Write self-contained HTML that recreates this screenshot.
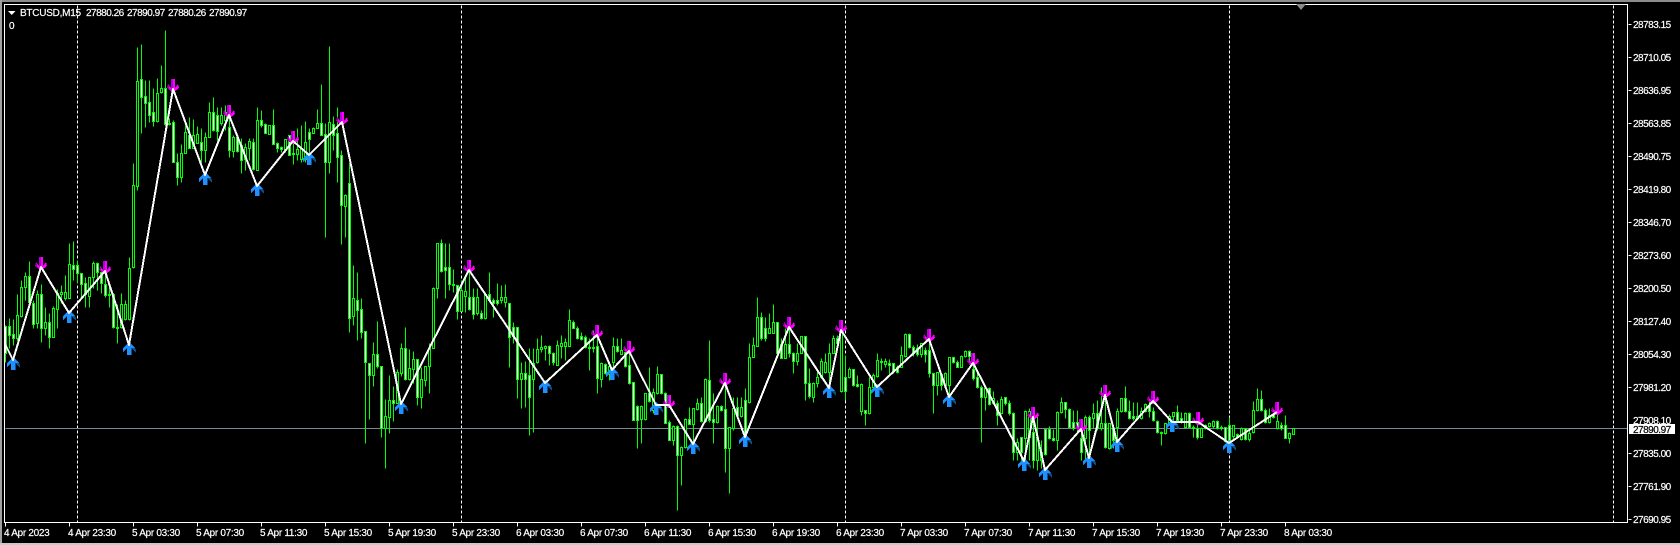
<!DOCTYPE html>
<html><head><meta charset="utf-8"><style>
html,body{margin:0;padding:0;background:#000;width:1680px;height:545px;overflow:hidden}
svg{display:block}
text{font-family:"Liberation Sans",sans-serif;font-size:10px;fill:#fff;stroke:#fff;stroke-width:.2px;letter-spacing:-.5px}
.t text{letter-spacing:-.3px}
</style></head><body>
<svg width="1680" height="545" viewBox="0 0 1680 545" xmlns="http://www.w3.org/2000/svg">
<rect width="1680" height="545" fill="#000"/>
<rect width="1680" height="2" fill="#8c8c8c"/>
<rect y="0" width="2" height="545" fill="#a0a0a0"/>
<rect y="543" width="1680" height="2" fill="#c8c8c8"/>
<g transform="translate(.5 .5)" shape-rendering="crispEdges" fill="none">
<path d="M77 5V522M461 5V522M845 5V522M1229 5V522M1613 5V522" stroke="#fff" stroke-dasharray="3 2"/>
<path d="M5 428H1627" stroke="#778899"/>
<path stroke="#0f0" d="M5 325V362M9 318V348M13 319V345M17 294V340M21 280V317M25 272V300M29 261V303M33 300V328M37 290V328M41 284V342M45 307V335M49 313V348M53 306V337M57 289V328M61 285V303M65 275V300M69 243V298M73 241V280M77 260V283M81 273V297M85 277V307M89 277V307M93 261V288M97 262V290M101 268V293M105 272V297M109 283V307M113 293V328M117 304V343M121 293V328M125 300V320M129 257V320M133 163V268M137 47V190M141 44V133M145 80V127M149 80V122M153 88V126M157 78V122M161 65V93M165 30V125M169 118V125M173 120V162M177 153V185M181 144V182M185 125V153M189 117V148M193 119V148M197 126V143M201 128V162M205 132V162M209 102V137M213 97V131M217 107V140M221 107V125M225 105V130M229 107V157M233 135V157M237 137V152M241 138V173M245 143V170M249 138V160M253 138V170M257 107V170M261 110V127M265 123V133M269 125V134M273 109V144M277 142V152M281 146V152M285 139V152M289 135V155M293 137V164M297 128V160M301 125V162M305 121V162M309 128V152M313 127V133M317 109V128M321 84V135M325 123V237M329 46V173M333 116V150M337 107V182M341 150V244M345 194V237M349 163V332M353 265V325M357 272V340M361 298V338M365 331V443M369 363V419M373 342V386M377 321V368M381 366V437M385 399V468M389 375V433M393 386V421M397 369V403M401 343V376M405 327V380M409 349V380M413 351V383M417 359V405M421 367V408M425 366V386M429 343V393M433 287V348M437 243V298M441 239V272M445 243V298M449 243V290M453 269V292M457 285V319M461 280V311M465 277V312M469 263V310M473 288V319M477 288V315M481 310V319M485 292V319M489 272V302M493 298V317M497 283V305M501 285V303M505 284V307M509 303V367M513 322V343M517 327V398M521 362V408M525 361V407M529 348V435M533 348V432M537 338V363M541 335V352M545 345V360M549 345V365M553 352V365M557 340V365M561 335V358M565 338V360M569 309V346M573 320V328M577 326V339M581 332V340M585 335V348M589 338V370M593 330V352M597 330V393M601 362V387M605 363V374M609 362V380M613 337V367M617 338V352M621 338V354M625 348V367M629 352V384M633 382V420M637 405V448M641 405V443M645 393V420M649 367V402M653 388V413M657 366V394M661 374V394M665 392V423M669 420V440M673 425V445M677 425V510M681 446V485M685 418V448M689 407V424M693 408V447M697 398V410M701 397V422M705 378V422M709 340V422M713 393V443M717 405V423M721 405V411M725 383V472M729 427V493M733 397V430M737 397V417M741 397V417M745 388V437M749 343V403M753 337V357M757 297V346M761 312V340M765 317V341M769 313V333M773 304V333M777 322V353M781 338V358M785 328V358M789 328V357M793 352V373M797 343V365M801 336V353M805 336V400M809 368V398M813 382V402M817 368V387M821 358V378M825 353V373M829 343V387M833 335V353M837 335V344M841 325V392M845 355V400M849 367V378M853 369V386M857 375V387M861 383V415M865 410V425M869 377V414M873 373V388M877 353V377M881 358V370M885 358V367M889 359V375M893 363V373M897 365V373M901 346V367M905 333V357M909 333V348M913 345V356M917 344V356M921 343V357M925 347V362M929 342V377M933 373V413M937 372V395M941 373V390M945 372V387M949 357V405M953 357V363M957 360V367M961 355V367M965 350V357M969 350V364M973 358V380M977 373V388M981 385V442M985 387V410M989 387V405M993 391V404M997 400V425M1001 396V414M1005 397V405M1009 400V415M1013 412V460M1017 438V460M1021 437V460M1025 410V460M1029 408V460M1033 413V468M1037 415V470M1041 440V468M1045 429V455M1049 426V439M1053 429V441M1057 411V450M1061 397V413M1065 402V418M1069 408V428M1073 410V430M1077 410V433M1081 425V460M1085 415V460M1089 415V465M1093 403V428M1097 400V430M1101 387V430M1105 395V448M1109 423V449M1113 427V448M1117 408V440M1121 398V412M1125 386V412M1129 400V419M1133 402V420M1137 402V419M1141 407V419M1145 403V412M1149 400V417M1153 407V421M1157 420V433M1161 431V445M1165 423V434M1169 414V425M1173 412V424M1177 405V421M1181 412V423M1185 412V428M1189 412V427M1193 425V437M1197 413V439M1201 427V437M1205 424V429M1209 422V427M1213 420V428M1217 420V429M1221 425V430M1225 427V442M1229 417V441M1233 425V438M1237 433V438M1241 427V440M1245 428V440M1249 430V441M1253 401V433M1257 388V411M1261 390V411M1265 408V423M1269 408V423M1273 410V418M1277 405V429M1281 422V430M1285 415V438M1289 432V443M1293 428V434"/>
<path stroke="#0f0" fill="#000" d="M16 315h2v23h-2zM20 287h2v29h-2zM24 276h2v11h-2zM36 294h2v29h-2zM44 322h2v6h-2zM52 308h2v29h-2zM56 293h2v16h-2zM60 292h2v2h-2zM64 292h2v6h-2zM68 264h2v34h-2zM88 277h2v19h-2zM92 263h2v14h-2zM120 304h2v23h-2zM124 304h2v15h-2zM128 268h2v51h-2zM132 185h2v82h-2zM136 81h2v105h-2zM156 93h2v28h-2zM160 88h2v4h-2zM180 153h2v24h-2zM184 132h2v21h-2zM192 135h2v13h-2zM196 134h2v9h-2zM204 137h2v13h-2zM208 112h2v25h-2zM220 115h2v8h-2zM224 112h2v8h-2zM232 137h2v14h-2zM244 147h2v12h-2zM248 141h2v7h-2zM256 120h2v50h-2zM268 125h2v9h-2zM284 139h2v11h-2zM296 149h2v5h-2zM300 148h2v11h-2zM304 142h2v17h-2zM312 128h2v5h-2zM316 123h2v5h-2zM328 122h2v40h-2zM344 195h2v11h-2zM352 298h2v18h-2zM372 354h2v21h-2zM384 416h2v12h-2zM388 400h2v17h-2zM396 372h2v31h-2zM400 348h2v25h-2zM408 368h2v11h-2zM412 359h2v10h-2zM420 379h2v18h-2zM424 366h2v14h-2zM428 348h2v18h-2zM432 288h2v60h-2zM436 243h2v45h-2zM460 290h2v21h-2zM464 291h2v5h-2zM476 297h2v16h-2zM484 294h2v24h-2zM500 297h2v3h-2zM504 297h2v5h-2zM520 373h2v6h-2zM532 363h2v16h-2zM536 349h2v13h-2zM540 347h2v2h-2zM544 346h2v2h-2zM556 345h2v20h-2zM560 343h2v3h-2zM564 342h2v4h-2zM568 320h2v26h-2zM600 363h2v16h-2zM608 366h2v8h-2zM612 346h2v16h-2zM620 350h2v4h-2zM640 406h2v13h-2zM644 393h2v26h-2zM652 392h2v18h-2zM656 374h2v19h-2zM672 426h2v14h-2zM680 447h2v8h-2zM684 419h2v28h-2zM692 408h2v16h-2zM696 403h2v6h-2zM704 379h2v42h-2zM716 406h2v16h-2zM728 427h2v21h-2zM732 408h2v20h-2zM740 407h2v9h-2zM748 357h2v45h-2zM752 345h2v12h-2zM756 317h2v29h-2zM768 328h2v5h-2zM772 322h2v11h-2zM784 344h2v14h-2zM796 353h2v8h-2zM800 336h2v17h-2zM812 383h2v14h-2zM816 377h2v6h-2zM820 361h2v16h-2zM824 362h2v10h-2zM828 353h2v19h-2zM832 338h2v15h-2zM840 332h2v59h-2zM848 369h2v8h-2zM860 384h2v27h-2zM868 387h2v26h-2zM872 375h2v12h-2zM876 360h2v16h-2zM884 361h2v3h-2zM900 355h2v12h-2zM904 334h2v22h-2zM920 343h2v11h-2zM936 372h2v13h-2zM944 373h2v12h-2zM948 357h2v28h-2zM960 356h2v11h-2zM964 351h2v5h-2zM984 388h2v9h-2zM992 398h2v5h-2zM1000 399h2v14h-2zM1016 442h2v10h-2zM1024 411h2v27h-2zM1028 411h2v26h-2zM1036 437h2v23h-2zM1040 452h2v8h-2zM1056 412h2v28h-2zM1060 402h2v10h-2zM1084 417h2v21h-2zM1092 413h2v5h-2zM1100 423h2v5h-2zM1108 423h2v25h-2zM1116 411h2v16h-2zM1120 398h2v13h-2zM1136 416h2v2h-2zM1140 411h2v7h-2zM1144 404h2v7h-2zM1164 423h2v10h-2zM1168 416h2v8h-2zM1172 412h2v4h-2zM1184 413h2v14h-2zM1200 428h2v9h-2zM1204 425h2v3h-2zM1208 423h2v3h-2zM1212 421h2v5h-2zM1232 425h2v11h-2zM1240 428h2v11h-2zM1248 433h2v6h-2zM1252 410h2v22h-2zM1256 399h2v11h-2zM1268 415h2v7h-2zM1276 421h2v7h-2zM1288 433h2v5h-2zM1292 428h2v6h-2z"/>
<path stroke="#0f0" fill="#fff" d="M4 326h2v27h-2zM8 326h2v9h-2zM12 334h2v4h-2zM28 276h2v26h-2zM32 303h2v21h-2zM40 294h2v34h-2zM48 322h2v15h-2zM72 265h2v4h-2zM76 265h2v8h-2zM80 273h2v11h-2zM84 283h2v11h-2zM96 263h2v9h-2zM100 272h2v11h-2zM104 284h2v11h-2zM108 294h2v1h-2zM112 294h2v33h-2zM116 327h2v1h-2zM140 79h2v18h-2zM144 96h2v7h-2zM148 102h2v13h-2zM152 112h2v9h-2zM164 88h2v36h-2zM168 123h2v1h-2zM172 122h2v40h-2zM176 162h2v15h-2zM188 135h2v13h-2zM200 142h2v8h-2zM212 112h2v18h-2zM216 115h2v16h-2zM228 127h2v23h-2zM236 137h2v14h-2zM240 145h2v15h-2zM252 142h2v27h-2zM260 120h2v5h-2zM264 124h2v9h-2zM272 125h2v19h-2zM276 143h2v5h-2zM280 147h2v2h-2zM288 135h2v20h-2zM292 153h2v1h-2zM308 132h2v7h-2zM320 123h2v12h-2zM324 134h2v28h-2zM332 124h2v11h-2zM336 133h2v24h-2zM340 155h2v50h-2zM348 183h2v135h-2zM356 300h2v10h-2zM360 309h2v23h-2zM364 331h2v31h-2zM368 363h2v12h-2zM376 354h2v12h-2zM380 366h2v62h-2zM392 400h2v3h-2zM404 348h2v31h-2zM416 359h2v38h-2zM440 243h2v28h-2zM444 267h2v3h-2zM448 267h2v17h-2zM452 284h2v1h-2zM456 285h2v26h-2zM468 297h2v12h-2zM472 297h2v17h-2zM480 313h2v5h-2zM488 294h2v6h-2zM492 300h2v3h-2zM496 300h2v3h-2zM508 303h2v34h-2zM512 327h2v9h-2zM516 327h2v52h-2zM524 373h2v6h-2zM528 375h2v22h-2zM548 346h2v7h-2zM552 353h2v9h-2zM572 322h2v6h-2zM576 328h2v10h-2zM580 336h2v3h-2zM584 337h2v10h-2zM588 347h2v1h-2zM592 347h2v1h-2zM596 346h2v32h-2zM604 364h2v9h-2zM616 346h2v5h-2zM624 352h2v14h-2zM628 365h2v18h-2zM632 382h2v38h-2zM636 406h2v14h-2zM648 393h2v8h-2zM660 374h2v19h-2zM664 393h2v30h-2zM668 422h2v18h-2zM676 426h2v29h-2zM688 419h2v5h-2zM700 403h2v18h-2zM708 380h2v40h-2zM712 419h2v3h-2zM720 406h2v4h-2zM724 409h2v39h-2zM736 407h2v8h-2zM744 400h2v37h-2zM760 317h2v21h-2zM764 328h2v10h-2zM776 322h2v31h-2zM780 344h2v14h-2zM788 344h2v9h-2zM792 353h2v8h-2zM804 336h2v47h-2zM808 383h2v13h-2zM836 338h2v5h-2zM844 377h2v14h-2zM852 369h2v16h-2zM856 384h2v2h-2zM864 410h2v3h-2zM880 361h2v1h-2zM888 363h2v2h-2zM892 363h2v8h-2zM896 367h2v5h-2zM908 334h2v13h-2zM912 347h2v6h-2zM916 348h2v6h-2zM924 350h2v4h-2zM928 350h2v23h-2zM932 373h2v12h-2zM940 374h2v11h-2zM952 357h2v5h-2zM956 362h2v5h-2zM968 351h2v5h-2zM972 369h2v9h-2zM976 377h2v10h-2zM980 387h2v10h-2zM988 388h2v16h-2zM996 403h2v12h-2zM1004 397h2v6h-2zM1008 403h2v10h-2zM1012 413h2v39h-2zM1020 437h2v15h-2zM1032 432h2v28h-2zM1044 429h2v25h-2zM1048 429h2v9h-2zM1052 438h2v2h-2zM1064 402h2v7h-2zM1068 409h2v18h-2zM1072 422h2v6h-2zM1076 422h2v6h-2zM1080 438h2v14h-2zM1088 417h2v13h-2zM1096 413h2v15h-2zM1104 423h2v24h-2zM1112 428h2v12h-2zM1124 398h2v13h-2zM1128 411h2v7h-2zM1132 416h2v2h-2zM1148 405h2v6h-2zM1152 411h2v9h-2zM1156 421h2v11h-2zM1160 432h2v1h-2zM1176 412h2v8h-2zM1180 418h2v4h-2zM1188 413h2v14h-2zM1192 427h2v1h-2zM1196 428h2v9h-2zM1216 421h2v7h-2zM1220 427h2v1h-2zM1224 427h2v14h-2zM1228 425h2v16h-2zM1236 434h2v3h-2zM1244 428h2v11h-2zM1260 399h2v11h-2zM1264 410h2v12h-2zM1272 414h2v3h-2zM1280 425h2v3h-2zM1284 425h2v13h-2z"/>
</g>
<defs>
<g id="d"><path fill="#f0f" d="M-2-10H2V-1L5-5 6-1 1 3H-1L-6-1-5-5-2-1Z"/><path fill="#b000d8" d="M-2-10H0V1H-1L-2-1Z"/><path fill="#a000a0" d="M-6-1-5-5-4-4-4-1-1 3Z"/></g>
<g id="u"><path fill="#1e90ff" d="M0-3 6 3V7L2 3V10H-2V3L-6 7V3Z"/><path fill="#0c4f8c" d="M6 3 7 5V8L6 7 2 3ZM2 3H3V10H2Z"/></g>
</defs>
<g shape-rendering="crispEdges">
<use href="#u" x="13" y="360"/><use href="#d" x="41" y="267"/><use href="#u" x="69" y="313"/><use href="#d" x="105" y="271"/><use href="#u" x="129" y="345"/><use href="#d" x="173" y="89"/><use href="#u" x="205" y="175"/><use href="#d" x="229" y="115"/><use href="#u" x="257" y="186"/><use href="#d" x="293" y="141"/><use href="#u" x="309" y="155"/><use href="#d" x="342" y="122"/><use href="#u" x="401" y="404"/><use href="#d" x="469" y="270"/><use href="#u" x="545" y="383"/><use href="#d" x="597" y="335"/><use href="#u" x="612" y="370"/><use href="#d" x="629" y="351"/><use href="#u" x="656" y="405"/><use href="#d" x="669" y="405"/><use href="#u" x="693" y="444"/><use href="#d" x="725" y="383"/><use href="#u" x="745" y="437"/><use href="#d" x="789" y="327"/><use href="#u" x="829" y="388"/><use href="#d" x="841" y="330"/><use href="#u" x="877" y="387"/><use href="#d" x="929" y="339"/><use href="#u" x="949" y="397"/><use href="#d" x="973" y="363"/><use href="#u" x="1024" y="461"/><use href="#d" x="1033" y="417"/><use href="#u" x="1045" y="470"/><use href="#d" x="1081" y="429"/><use href="#u" x="1089" y="458"/><use href="#d" x="1105" y="395"/><use href="#u" x="1117" y="442"/><use href="#d" x="1153" y="401"/><use href="#u" x="1172" y="422"/><use href="#d" x="1198" y="422"/><use href="#u" x="1229" y="443"/><use href="#d" x="1277" y="412"/>
</g>
<path shape-rendering="crispEdges" fill="none" stroke="#fff" stroke-width="2" stroke-linejoin="round" d="M5 344L13 360 41 267 69 313 105 271 129 345 173 89 205 175 229 115 257 186 293 141 309 155 342 122 401 404 469 270 545 383 597 335 612 370 629 351 656 405 669 405 693 444 725 383 745 437 789 327 829 388 841 330 877 387 929 339 949 397 973 363 1024 461 1033 417 1045 470 1081 429 1089 458 1105 395 1117 442 1153 401 1172 422 1198 422 1229 443 1277 412"/>
<g transform="translate(.5 .5)" shape-rendering="crispEdges" fill="none" stroke="#fff">
<path d="M4 4H1627V522H4Z"/>
<path d="M1628 24h3M1628 57h3M1628 90h3M1628 123h3M1628 156h3M1628 189h3M1628 222h3M1628 255h3M1628 288h3M1628 321h3M1628 354h3M1628 387h3M1628 453h3M1628 486h3M1628 519h3"/>
<path d="M5 522v4M69 522v4M133 522v4M197 522v4M261 522v4M325 522v4M389 522v4M453 522v4M517 522v4M581 522v4M645 522v4M709 522v4M773 522v4M837 522v4M901 522v4M965 522v4M1029 522v4M1093 522v4M1157 522v4M1221 522v4M1285 522v4"/>
</g>
<path d="M8 11H15.500L11.750 15Z" fill="#fff"/>
<path d="M1296 4H1306L1301 10Z" fill="#8c8c8c"/>
<text x="20" y="16" style="letter-spacing:-.25px">BTCUSD,M15</text>
<text x="86" y="16">27880.26</text><text x="127" y="16">27890.97</text><text x="168" y="16">27880.26</text><text x="209" y="16">27890.97</text>
<text x="9" y="29">0</text>
<g>
<text x="1633" y="28">28783.15</text><text x="1633" y="61">28710.05</text><text x="1633" y="94">28636.95</text><text x="1633" y="127">28563.85</text><text x="1633" y="160">28490.75</text><text x="1633" y="193">28419.80</text><text x="1633" y="226">28346.70</text><text x="1633" y="259">28273.60</text><text x="1633" y="292">28200.50</text><text x="1633" y="325">28127.40</text><text x="1633" y="358">28054.30</text><text x="1633" y="391">27981.20</text><text x="1633" y="424">27908.10</text><text x="1633" y="457">27835.00</text><text x="1633" y="490">27761.90</text><text x="1633" y="523">27690.95</text>
</g>
<rect x="1629" y="424" width="46" height="10" fill="#fff"/>
<text x="1633" y="433" style="fill:#000;stroke:#000">27890.97</text>
<g class="t">
<text x="4" y="536">4 Apr 2023</text><text x="68" y="536">4 Apr 23:30</text><text x="132" y="536">5 Apr 03:30</text><text x="196" y="536">5 Apr 07:30</text><text x="260" y="536">5 Apr 11:30</text><text x="324" y="536">5 Apr 15:30</text><text x="388" y="536">5 Apr 19:30</text><text x="452" y="536">5 Apr 23:30</text><text x="516" y="536">6 Apr 03:30</text><text x="580" y="536">6 Apr 07:30</text><text x="644" y="536">6 Apr 11:30</text><text x="708" y="536">6 Apr 15:30</text><text x="772" y="536">6 Apr 19:30</text><text x="836" y="536">6 Apr 23:30</text><text x="900" y="536">7 Apr 03:30</text><text x="964" y="536">7 Apr 07:30</text><text x="1028" y="536">7 Apr 11:30</text><text x="1092" y="536">7 Apr 15:30</text><text x="1156" y="536">7 Apr 19:30</text><text x="1220" y="536">7 Apr 23:30</text><text x="1284" y="536">8 Apr 03:30</text>
</g>
</svg>
</body></html>
